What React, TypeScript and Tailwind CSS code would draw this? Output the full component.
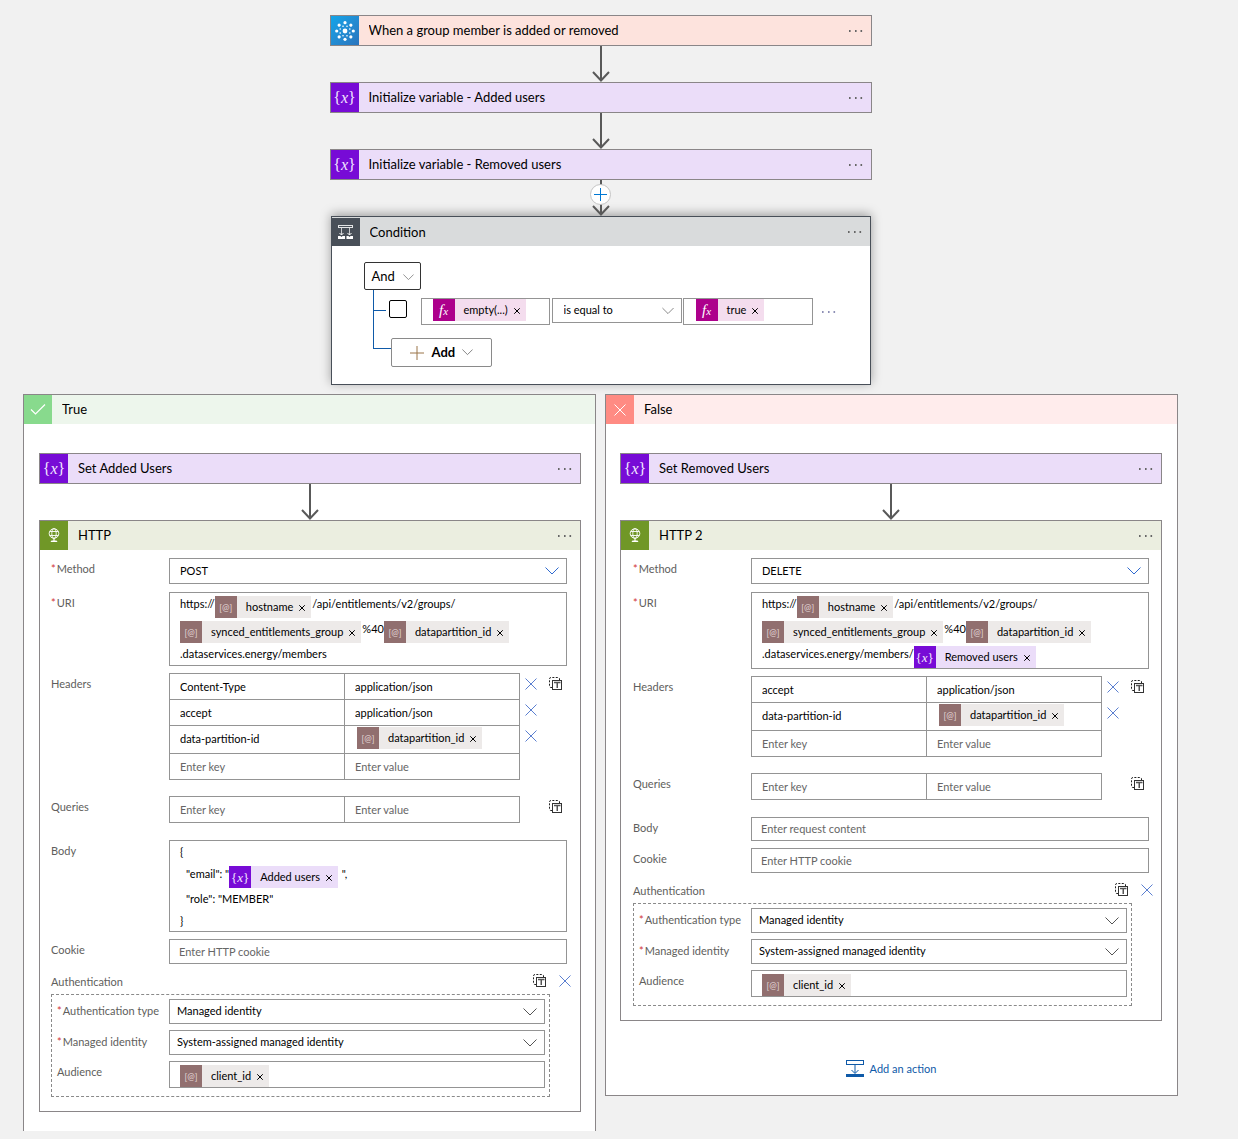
import React, { useId } from "react";

/* ---------- icons ---------- */

function Dots({ className = "text-[#666]" }: { className?: string }) {
  return (
    <svg width="14" height="2" viewBox="0 0 14 2" className={className} fill="currentColor" aria-hidden="true">
      <rect x="0" y="0" width="1.600" height="2" />
      <rect x="6" y="0" width="1.600" height="2" />
      <rect x="11.500" y="0" width="1.600" height="2" />
    </svg>
  );
}

function Chevron({ className, width = 14 }: { className: string; width?: number }) {
  return (
    <svg width={width} height={width / 2 + 1} viewBox="0 0 14 8" className={className} fill="none" stroke="currentColor" aria-hidden="true">
      <path d="M0.5 0.5 L7 7 L13.5 0.5" />
    </svg>
  );
}

function Cross({ size = 12, className = "text-[#5b7fd0]" }: { size?: number; className?: string }) {
  return (
    <svg width={size} height={size} viewBox="0 0 12 12" className={className} fill="none" stroke="currentColor" aria-hidden="true">
      <path d="M0.5 0.5 L11.5 11.5 M11.5 0.5 L0.5 11.5" />
    </svg>
  );
}

function ConnectorIcon() {
  const ring = [0, 45, 90, 135, 180, 225, 270, 315];
  return (
    <svg width="22" height="22" viewBox="-11 -11 22 22" fill="#fff" aria-hidden="true">
      <circle r="2.4" />
      {ring.map((a) => (
        <g key={a} transform={`rotate(${a})`}>
          <circle cx="8.3" cy="0" r="1.6" />
          <circle cx="4.8" cy="2" r="0.8" />
        </g>
      ))}
    </svg>
  );
}

function ConditionIcon() {
  return (
    <svg width="16" height="16" viewBox="0 0 16 16" fill="none" stroke="#fff" aria-hidden="true">
      <rect x="0.5" y="1.5" width="14" height="2" strokeOpacity="0.85" />
      <path d="M3.5 4 V11 M11.5 4 V11" strokeOpacity="0.7" />
      <path d="M1.5 9 L3.5 11 L5.5 9 M9.5 9 L11.5 11 L13.5 9" />
      <path d="M0 12 h2.5 l1 1 l1 -1 H7 v3 H0 z M8.500 12 h2 l1 1 l1 -1 H15 v3 H8.500 z" fill="#fff" stroke="none" />
    </svg>
  );
}

function GlobeIcon() {
  return (
    <svg width="12" height="16" viewBox="0 0 12 16" fill="none" stroke="#fff" strokeWidth="0.9" aria-hidden="true">
      <circle cx="6" cy="5.500" r="4.800" />
      <ellipse cx="6" cy="5.500" rx="2.200" ry="4.800" />
      <path d="M1.600 3.500 H10.400 M1.600 7.500 H10.400" />
      <path d="M6 10.300 V13" strokeWidth="1.200" />
      <path d="M3.500 12.500 H8.500 L9.500 14 H2.500 Z" fill="#fff" stroke="none" />
    </svg>
  );
}

function TemplateIcon() {
  return (
    <svg width="14" height="14" viewBox="0 0 14 14" fill="none" aria-hidden="true">
      <path d="M3 10.500 H2 Q0.500 10.500 0.500 9 V2 Q0.500 0.500 2 0.500 H9 Q10.500 0.500 10.500 2 V3" stroke="#222" strokeDasharray="2 1.400" />
      <rect x="3.500" y="3.500" width="9" height="9" stroke="#333" />
      <path d="M5 5.500 H11.500 M8.250 5.500 V11" stroke="#555" strokeWidth="1.500" />
    </svg>
  );
}

function AddActionIcon() {
  return (
    <svg width="18" height="18" viewBox="0 0 18 18" fill="none" stroke="#0f5aa8" aria-hidden="true">
      <rect x="0.500" y="0.500" width="17" height="4" />
      <path d="M9 5 V13 M5.500 10 L9 13.500 L12.500 10" />
      <rect x="0.500" y="14.500" width="17" height="2" fill="#0f5aa8" />
    </svg>
  );
}

function Braces({ className }: { className: string }) {
  return (
    <span className={`flex items-center font-['Liberation_Serif',serif] leading-none text-[#f3e8ff] ${className}`}>
      <span>{"{"}</span>
      <span className="italic">x</span>
      <span>{"}"}</span>
    </span>
  );
}

/* ---------- flow pieces ---------- */

function Arrow({ children }: { children?: React.ReactNode }) {
  return (
    <div className="relative flex h-9 justify-center">
      <svg width="18" height="36" viewBox="0 0 18 36" fill="none" stroke="#595959" strokeWidth="2" aria-hidden="true">
        <path d="M9 0 V34 M1 26 L9 34.500 L17 26" />
      </svg>
      {children}
    </div>
  );
}

type HeaderProps = { icon: React.ReactNode; iconClass: string; barClass: string; title: string; menu?: boolean };

function Header({ icon, iconClass, barClass, title, menu = true }: HeaderProps) {
  return (
    <div className={`flex h-[29px] items-center ${barClass}`}>
      <div className={`flex h-full w-[28px] shrink-0 items-center justify-center ${iconClass}`}>{icon}</div>
      <h2 className="ml-[10px] flex-1 truncate pb-px text-[13px] leading-5 text-black">{title}</h2>
      {menu && (
        <button type="button" aria-label={`${title} menu`} className="mr-2 flex h-5 items-center">
          <Dots />
        </button>
      )}
    </div>
  );
}

function VariableCard({ title }: { title: string }) {
  return (
    <div className="border border-[#8a8688]">
      <Header icon={<Braces className="text-base" />} iconClass="bg-[#770bd6]" barClass="bg-[#ebddf9]" title={title} />
    </div>
  );
}

type TokenKind = "param" | "variable" | "fx";
const tokenIcon: Record<TokenKind, string> = { param: "bg-[#916f6f]", variable: "bg-[#770bd6]", fx: "bg-[#ad008c]" };
const tokenBody: Record<TokenKind, string> = { param: "bg-[#edeae9]", variable: "bg-[#ebddf9]", fx: "bg-[#f4ddee]" };

function Token({ kind = "param", children }: { kind?: TokenKind; children: string }) {
  return (
    <span className="flex h-[22px] shrink-0 items-center">
      <span className={`flex h-full w-[22px] items-center justify-center ${tokenIcon[kind]}`}>
        {kind === "param" && <span className="text-[9px] leading-none text-[#e3d6d6]">[@]</span>}
        {kind === "variable" && <Braces className="text-[13px]" />}
        {kind === "fx" && (
          <span className="font-['Liberation_Serif',serif] text-[15px] leading-none text-white italic">
            f<span className="text-[11px]">x</span>
          </span>
        )}
      </span>
      <span className={`flex h-full items-center pr-[6px] pl-[9px] ${tokenBody[kind]}`}>
        {children}
        <button type="button" aria-label={`Remove ${children}`} className="mt-px ml-[6px]">
          <Cross size={6} className="stroke-2 text-black" />
        </button>
      </span>
    </span>
  );
}

const box = "border border-[#949494] bg-white";

function Label({ text, required, htmlFor, className }: { text: string; required?: boolean; htmlFor?: string; className: string }) {
  return (
    <label htmlFor={htmlFor} className={`shrink-0 leading-4 whitespace-nowrap text-[#605e5c] ${className}`}>
      {required && <span className="mr-px text-[#d13438]">*</span>}
      {text}
    </label>
  );
}

function Select({ id, value, height, chevron, pad = "pl-[10px]" }: { id?: string; value: string; height: string; chevron: string; pad?: string }) {
  return (
    <div className="relative flex-1">
      <select id={id} aria-label={id ? undefined : "Comparison"} defaultValue={value} className={`block w-full appearance-none pr-8 text-black ${box} ${height} ${pad}`}>
        <option>{value}</option>
      </select>
      <span className="pointer-events-none absolute inset-y-0 right-2 flex items-center">
        <Chevron className={chevron} />
      </span>
    </div>
  );
}

function Field({ label, required, inset, children }: { label: string; required?: boolean; inset?: boolean; children: (id: string) => React.ReactNode }) {
  const id = useId();
  return (
    <div className="flex items-start">
      <Label text={label} required={required} htmlFor={id} className={inset ? (required ? "w-[112px] pt-1" : "w-[112px] pt-[3px]") : "w-[118px] pt-[3px]"} />
      {children(id)}
    </div>
  );
}

const cell = "w-1/2 border border-[#949494] p-0 align-top";
const cellInput = "block h-6 w-full bg-transparent pl-[10px] text-black placeholder:text-[#666] outline-none";

type Pair = { key: string; value: string; token?: boolean };

function PairTable({ id, name, rows }: { id: string; name: string; rows: Pair[] }) {
  return (
    <div className="flex flex-1 items-start">
      <table className="flex-1 table-fixed border-collapse bg-white" aria-label={name}>
        <tbody>
          {rows.map((r) => (
            <tr key={r.key} className={r.token ? "h-[28px]" : "h-[26px]"}>
              <td className={cell}>
                <input aria-label={`${name} key`} defaultValue={r.key} className={cellInput} />
              </td>
              <td className={cell}>
                {r.token ? (
                  <div className="flex h-[25px] items-start pt-px pl-3">
                    <Token>{r.value}</Token>
                  </div>
                ) : (
                  <input aria-label={`${name} value`} defaultValue={r.value} className={cellInput} />
                )}
              </td>
            </tr>
          ))}
          <tr className="h-[26px]">
            <td className={cell}>
              <input id={id} placeholder="Enter key" className={cellInput} />
            </td>
            <td className={cell}>
              <input aria-label={`${name} value`} placeholder="Enter value" className={cellInput} />
            </td>
          </tr>
        </tbody>
      </table>
      <div className="ml-[5px] w-3">
        {rows.map((r) => (
          <div key={r.key} className={r.token ? "h-[28px]" : "h-[26px]"}>
            <button type="button" aria-label={`Delete ${r.key}`} className="flex h-[22px] items-center">
              <Cross />
            </button>
          </div>
        ))}
      </div>
      <button type="button" aria-label={`Switch ${name} to text mode`} className="mr-1 ml-3 flex h-[22px] items-center">
        <TemplateIcon />
      </button>
    </div>
  );
}

function TextLine({ children, className = "" }: { children: React.ReactNode; className?: string }) {
  return <div className={`flex items-start leading-[22px] whitespace-pre ${className}`}>{children}</div>;
}

function Inline({ children }: { children: React.ReactNode }) {
  return <span className="flex pt-[3px] pr-px">{children}</span>;
}

type HttpCardProps = { title: string; method: string; formClass: string; suffix?: React.ReactNode; headers: Pair[]; body?: React.ReactNode };

function HttpCard({ title, method, formClass, suffix, headers, body }: HttpCardProps) {
  const input = `min-w-0 flex-1 pl-[9px] text-black placeholder:text-[#666] ${box}`;
  return (
    <section className="border border-[#8a8688] bg-white">
      <Header icon={<GlobeIcon />} iconClass="bg-[#709727]" barClass="bg-[#ebeee0]" title={title} />
      <div className={`pt-2 pb-[14px] ${formClass}`}>
        <Field label="Method" required>
          {(id) => <Select id={id} value={method} height="h-[26px]" chevron="text-[#2f6ad0]" />}
        </Field>
        <div className="mt-2">
          <Field label="URI" required>
            {(id) => (
              <div id={id} role="textbox" aria-label="URI" className={`min-w-0 flex-1 pl-[10px] text-black ${box}`}>
                <TextLine>
                  https://
                  <Inline><Token>hostname</Token></Inline>
                  /api/entitlements/v2/groups/
                </TextLine>
                <TextLine>
                  <Inline><Token>synced_entitlements_group</Token></Inline>
                  %40
                  <Inline><Token>datapartition_id</Token></Inline>
                </TextLine>
                <TextLine>
                  .dataservices.energy/members{suffix}
                </TextLine>
              </div>
            )}
          </Field>
        </div>
        <div className="mt-[7px]">
          <Field label="Headers">{(id) => <PairTable id={id} name="Headers" rows={headers} />}</Field>
        </div>
        <div className="mt-4">
          <Field label="Queries">{(id) => <PairTable id={id} name="Queries" rows={[]} />}</Field>
        </div>
        <div className="mt-[17px]">
          <Field label="Body">
            {(id) =>
              body ? (
                <div id={id} role="textbox" aria-label="Body" className={`h-[92px] flex-1 pl-[10px] text-black ${box}`}>{body}</div>
              ) : (
                <input id={id} placeholder="Enter request content" className={`h-6 pb-px ${input}`} />
              )
            }
          </Field>
        </div>
        <div className="mt-[7px]">
          <Field label="Cookie">{(id) => <input id={id} placeholder="Enter HTTP cookie" className={`h-[25px] ${input}`} />}</Field>
        </div>
        <div className="mt-1 flex h-[26px] items-center">
          <span className="flex-1 pt-[2px] text-[#605e5c]">Authentication</span>
          <button type="button" aria-label="Switch authentication to text mode">
            <TemplateIcon />
          </button>
          <button type="button" aria-label="Remove authentication" className="-mr-1 ml-3">
            <Cross />
          </button>
        </div>
        <div className="mr-[17px] flex flex-col gap-[6px] border border-dashed border-[#8a8a8a] pt-1 pr-1 pb-2 pl-[5px]">
          <Field label="Authentication type" required inset>
            {(id) => <Select id={id} value="Managed identity" height="h-[25px]" chevron="text-[#555]" pad="pl-[7px]" />}
          </Field>
          <Field label="Managed identity" required inset>
            {(id) => <Select id={id} value="System-assigned managed identity" height="h-[25px]" chevron="text-[#555]" pad="pl-[7px]" />}
          </Field>
          <Field label="Audience" inset>
            {(id) => (
              <div id={id} role="textbox" aria-label="Audience" className={`flex h-[27px] flex-1 items-end pl-[10px] text-black ${box}`}>
                <Token>client_id</Token>
              </div>
            )}
          </Field>
        </div>
      </div>
    </section>
  );
}

function ConditionCard() {
  return (
    <section className="mx-px border border-[#484f58] bg-white shadow-[0_-2px_10px_rgba(0,0,0,0.35)]">
      <Header icon={<ConditionIcon />} iconClass="bg-[#484f58]" barClass="bg-[#d9dbdc] pt-px" title="Condition" />
      <div className="pt-4 pb-[17px] pl-8 text-black">
        <button type="button" className="flex h-7 w-[57px] items-center justify-between rounded-xs border border-[#333] pt-[2px] pr-[6px] pl-[7px] text-[13px]">
          And
          <Chevron className="text-[#777]" width={11} />
        </button>
        <div className="ml-[9px] flex items-start">
          <div className="h-[59px] w-[18px] shrink-0 border-b border-l border-[#0f5aa8] pt-5">
            <div className="w-3 border-t border-[#0f5aa8]" />
          </div>
          <div className="flex-1">
            <div className="-ml-[2px] flex items-start pt-2">
              <input type="checkbox" aria-label="Select row" className="mt-[2px] mr-[14px] h-[18px] w-[18px] shrink-0 appearance-none rounded-xs border border-black bg-white" />
              <div className={`mr-[2px] flex h-[27px] w-[129px] items-start pl-[11px] ${box}`}>
                <Token kind="fx">empty(...)</Token>
              </div>
              <div className="mr-px flex w-[130px]">
                <Select value="is equal to" height="h-[25px]" chevron="text-[#777] w-3" pad="pl-[11px]" />
              </div>
              <div className={`flex h-[27px] w-[130px] items-start pl-[12px] ${box}`}>
                <Token kind="fx">true</Token>
              </div>
              <button type="button" aria-label="Row menu" className="ml-[9px] flex h-[27px] items-center">
                <Dots className="text-[#8d8fb5]" />
              </button>
            </div>
            <button type="button" className="mt-[13px] flex h-[29px] w-[101px] items-center rounded-xs border border-[#8a8a8a] pl-[18px] text-[13px] font-bold">
              <svg width="14" height="14" viewBox="0 0 14 14" stroke="#9a7448" aria-hidden="true">
                <path d="M7 0 V14 M0 7 H14" />
              </svg>
              <span className="mr-[7px] ml-2">Add</span>
              <Chevron className="text-[#666]" width={11} />
            </button>
          </div>
        </div>
      </div>
    </section>
  );
}

/* ---------- page ---------- */

export default function App() {
  return (
    <main className="min-h-screen bg-[#f1f1f1] pt-[15px] pr-[60px] pb-2 pl-[23px] font-[Lato,'Open_Sans',sans-serif] text-[11px]">
      <div className="mx-auto w-full max-w-[542px]">
        <div className="border border-[#8a8688]">
          <Header icon={<ConnectorIcon />} iconClass="bg-linear-to-br from-[#0fa5e9] to-[#2a74bd]" barClass="bg-[#fde3dd]" title="When a group member is added or removed" />
        </div>
        <Arrow />
        <VariableCard title="Initialize variable - Added users" />
        <Arrow />
        <VariableCard title="Initialize variable - Removed users" />
        <Arrow>
          <button type="button" aria-label="Insert a step" className="absolute top-1 flex h-[21px] w-[21px] items-center justify-center rounded-full border border-[#c4c4c4] bg-white">
            <svg width="13" height="13" viewBox="0 0 13 13" stroke="#0078d4" aria-hidden="true">
              <path d="M6.500 0 V13 M0 6.500 H13" />
            </svg>
          </button>
        </Arrow>
        <ConditionCard />
      </div>

      <div className="mt-[9px] grid grid-cols-2 items-start gap-[9px]">
        <section className="border border-b-0 border-[#8a8688] bg-white">
          <Header
            icon={
              <svg width="16" height="11" viewBox="0 0 16 11" fill="none" stroke="#fff" strokeWidth="1.200" aria-hidden="true">
                <path d="M1 5.500 L5.500 10 L15 0.500" />
              </svg>
            }
            iconClass="bg-[#88da8d]"
            barClass="bg-[#edf6ec]"
            title="True"
            menu={false}
          />
          <div className="pt-[29px] pr-[14px] pb-[19px] pl-[15px]">
            <VariableCard title="Set Added Users" />
            <Arrow />
            <HttpCard
              title="HTTP"
              method="POST"
              formClass="pl-[11px] pr-[13px]"
              headers={[
                { key: "Content-Type", value: "application/json" },
                { key: "accept", value: "application/json" },
                { key: "data-partition-id", value: "datapartition_id", token: true },
              ]}
              body={
                <>
                  <TextLine>{"{"}</TextLine>
                  <TextLine className="pl-[6px]">
                    {'"email": "'}
                    <Inline><Token kind="variable">Added users</Token></Inline>
                    {' ",'}
                  </TextLine>
                  <TextLine className="pl-[6px]">{'"role": "MEMBER"'}</TextLine>
                  <TextLine>{"}"}</TextLine>
                </>
              }
            />
          </div>
        </section>

        <section className="border border-[#8a8688] bg-white">
          <Header icon={<Cross className="text-white" />} iconClass="bg-[#ff8b83]" barClass="bg-[#ffecec]" title="False" menu={false} />
          <div className="pt-[29px] pr-[15px] pb-4 pl-[14px]">
            <VariableCard title="Set Removed Users" />
            <Arrow />
            <HttpCard
              title="HTTP 2"
              method="DELETE"
              formClass="pl-[12px] pr-[12px]"
              suffix={
                <>
                  /<Inline><Token kind="variable">Removed users</Token></Inline>
                </>
              }
              headers={[
                { key: "accept", value: "application/json" },
                { key: "data-partition-id", value: "datapartition_id", token: true },
              ]}
            />
            <button type="button" className="mx-auto mt-[38px] flex h-5 items-center gap-[6px] text-[#0f5aa8]">
              <AddActionIcon />
              Add an action
            </button>
          </div>
        </section>
      </div>
    </main>
  );
}
